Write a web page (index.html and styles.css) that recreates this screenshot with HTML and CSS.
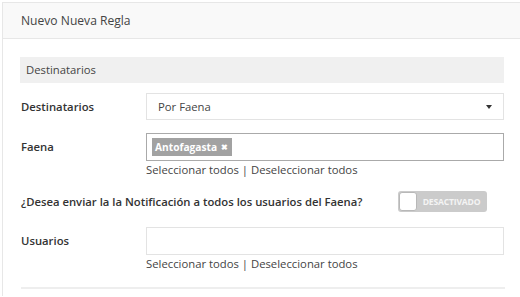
FILE: index.html
```html
<!DOCTYPE html>
<html lang="es">
<head>
<meta charset="utf-8">
<link rel="stylesheet" href="styles.css">
</head>
<body>
<div class="panel">
  <div class="panel-head">Nuevo Nueva Regla</div>
  <div class="panel-body">
    <div class="section">Destinatarios</div>
    <div class="row row-1">
      <div class="label">Destinatarios</div>
      <div class="control">
        <div class="select"><span>Por Faena</span><span class="caret"></span></div>
      </div>
    </div>
    <div class="row row-2">
      <div class="label">Faena</div>
      <div class="control">
        <div class="multi focus"><span class="tag">Antofagasta <span class="x">✖</span></span></div>
        <div class="links">Seleccionar todos | Deseleccionar todos</div>
      </div>
    </div>
    <div class="question">
      <span class="q-text">¿Desea enviar la la Notificación a todos los usuarios del Faena?</span>
      <span class="toggle"><span class="knob"></span><span class="t-label">DESACTIVADO</span></span>
    </div>
    <div class="row row-3">
      <div class="label">Usuarios</div>
      <div class="control">
        <div class="multi"></div>
        <div class="links">Seleccionar todos | Deseleccionar todos</div>
      </div>
    </div>
    <div class="hr"></div>
  </div>
</div>
</body>
</html>
```
FILE: styles.css
```css
html, body { margin: 0; padding: 0; background: #fff; }
body { font-family: "Open Sans", "Noto Sans", sans-serif; font-size: 11.3px; color: #333; overflow: hidden; height: 297px; }
.panel { margin: 2px 0 0 2px; width: 540px; border: 1px solid #e7e7e7; border-right: none; border-bottom: none; background: #fff; height: 294px; box-sizing: border-box; }
.panel-head { height: 35px; line-height: 35px; padding-left: 18px; font-size: 12.1px; color: #444; background: #f9f9f9; border-bottom: 1px solid #e7e7e7; }
.panel-body { width: 484px; padding: 18px 0 0 17px; }
.section { height: 26px; line-height: 26px; background: #f0f0f0; padding-left: 6px; color: #444; }
.row { display: flex; align-items: flex-start; }
.label { width: 126px; flex: none; font-weight: 600; color: #333; }
.control { flex: 1; }
.row-1 { margin-top: 10px; }
.row-1 .label { line-height: 27px; padding-left: 1px; width: 125px; }
.select { height: 25px; border: 1px solid #e3e3e3; display: flex; align-items: center; justify-content: space-between; padding: 0 11px 0 11px; color: #444; }
.caret { width: 0; height: 0; border-left: 3px solid transparent; border-right: 3px solid transparent; border-top: 4px solid #333; }
.row-2 { margin-top: 13px; }
.row-2 .label, .row-3 .label { line-height: 28px; padding-left: 1px; width: 125px; }
.multi { height: 26px; border: 1px solid #e3e3e3; display: flex; align-items: center; padding-left: 5px; }
.multi.focus { border-color: #aaa; }
.tag { background: #a2a2a2; color: #fff; font-weight: 700; font-size: 10.2px; height: 18px; line-height: 18px; padding: 0 4px 0 3px; }
.tag .x { font-size: 7.5px; margin-left: 1px; position: relative; top: -1px; }
.links { color: #444; line-height: 16px; margin-top: 1px; }
.question { display: flex; align-items: center; margin-top: 13px; padding-left: 1px; }
.q-text { font-weight: 600; width: 377px; flex: none; }
.toggle { display: flex; align-items: center; width: 89px; height: 21px; background: #cbcbcb; border-radius: 3px; box-sizing: border-box; padding: 1px; }
.knob { width: 16px; height: 17px; background: #fff; border: 1px solid #b8b8b8; border-radius: 3px; flex: none; }
.t-label { flex: 1; text-align: center; color: #f4f4f4; font-weight: 700; font-size: 8.6px; letter-spacing: -0.2px; }
.row-3 { margin-top: 15px; }
.hr { height: 2px; background: #eee; margin-top: 15px; width: 484px; margin-left: 1px; }
```
